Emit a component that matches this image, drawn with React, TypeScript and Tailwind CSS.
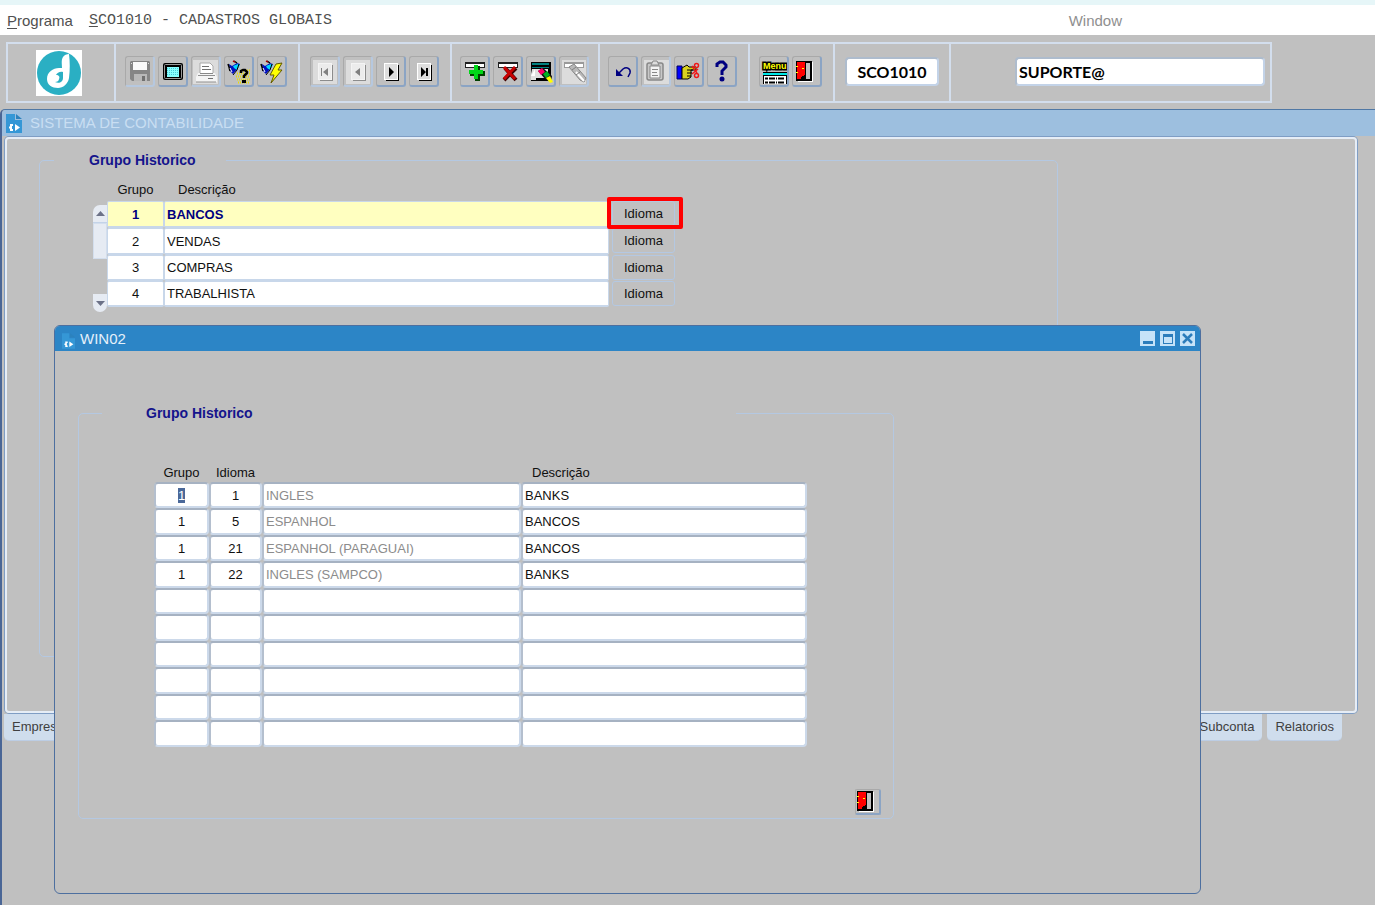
import { useEffect, useRef } from 'react'
import type { ReactNode } from 'react'
import clsx from 'clsx'

const grupos = [
  { grupo: '1', descricao: 'BANCOS' },
  { grupo: '2', descricao: 'VENDAS' },
  { grupo: '3', descricao: 'COMPRAS' },
  { grupo: '4', descricao: 'TRABALHISTA' },
]

const idiomas = [
  { grupo: '1', idioma: '1', nome: 'INGLES', descricao: 'BANKS' },
  { grupo: '1', idioma: '5', nome: 'ESPANHOL', descricao: 'BANCOS' },
  { grupo: '1', idioma: '21', nome: 'ESPANHOL (PARAGUAI)', descricao: 'BANCOS' },
  { grupo: '1', idioma: '22', nome: 'INGLES (SAMPCO)', descricao: 'BANKS' },
  ...Array.from({ length: 6 }, () => ({ grupo: '', idioma: '', nome: '', descricao: '' })),
]

function Flashlight() {
  return (
    <g>
      <path d="M5 8l3 2 5-3 3 1-2 4-5 6-3-3z" fill="#0010c0" />
      <path d="M9 10l5-2 2 1-3 5-3-2z" fill="#00d8ff" />
      <path d="M4 8l1 3 1 4M10 5l3 2" stroke="#000" strokeWidth="1.500" fill="none" />
      <path d="M9 5l2 1" stroke="#a00000" strokeWidth="1.500" />
      <path d="M15 8l-2 6-4 5" stroke="#000" fill="none" />
      <path d="M6 12l2 4" stroke="#fff" />
    </g>
  )
}

function NavPage({ d, off }: { d: string; off?: boolean }) {
  return (
    <g>
      {off && <path d="M3 4h24v24H3z" fill="#dcdcdc" />}
      <path d="M10 9h13v16H10z" fill={off ? '#8c8c8c' : '#000'} />
      <path d="M8 7h14v17H8z" fill={off ? '#f4f4f4' : '#fff'} />
      <path d="M9 8h12v15H9z" fill={off ? '#ececec' : '#dedede'} />
      <path d={d} fill={off ? '#808080' : '#000'} />
    </g>
  )
}

function Bar({ off }: { off?: boolean }) {
  return (
    <g>
      <path d="M5 6h20v6H5z" fill={off ? '#9a9a9a' : '#202020'} />
      <path d="M6 8h18v3H6z" fill="#fff" />
    </g>
  )
}

function Door() {
  return (
    <g shapeRendering="crispEdges">
      <path d="M4 5h16v20H4z" fill="#000" />
      <path d="M14 7h4v16h-4z" fill="#c0c0c0" />
      <path d="M20 6h1v20H6v-1h14z" fill="#fff" />
      <path d="M5 6h8v14l-3 3H5z" fill="#f00" />
      <path d="M13 6h1v15h-2l-2 2h-1v-2l4-2z" fill="#000" />
      <path d="M4 10h2v1H4zM4 16h2v1H4zM10 12h2v1h-2z" fill="#ff0" />
    </g>
  )
}

type Tool = { name: string; off?: boolean; art: ReactNode }

const fileTools: Tool[] = [
  {
    name: 'Salvar',
    off: true,
    art: (
      <g>
        <path d="M5 6l1-1h18l1 1v19H7l-2-2z" fill="#858585" />
        <path d="M8 6h14v8H8z" fill="#fafafa" />
        <path d="M6 7h1v1H6zM23 7h1v1h-1z" fill="#ddd" />
        <path d="M9 18h13v7H9z" fill="#b8b8b8" />
        <path d="M17 20h3v5h-3z" fill="#707070" />
      </g>
    ),
  },
  {
    name: 'Tela',
    art: (
      <g>
        <rect x="5" y="7" width="20" height="17" rx="2" fill="#000" />
        <rect x="6.500" y="8.500" width="17" height="14" rx="1" fill="none" stroke="#999" />
        <path d="M9 11h12v10H9z" fill="#8ff" />
        <path d="M9 12.500h12M9 14.500h12M9 16.500h12M9 18.500h12" stroke="#48ccd8" strokeDasharray="1 1" />
      </g>
    ),
  },
  {
    name: 'Imprimir',
    off: true,
    art: (
      <g>
        <path d="M2 4h25v24H2z" fill="#dcdcdc" />
        <path d="M9 7h10l3 3v8H9z" fill="#fff" stroke="#aaa" />
        <path d="M11 10.500h7M11 13.500h9" stroke="#707070" />
        <path d="M7 17h17l2 4v5H5v-5z" fill="#f4f4f4" />
        <path d="M7 19.500h17M5 26h20" stroke="#909090" />
        <path d="M17 22h5v1h-5z" fill="#707070" />
        <path d="M9 17.500h13" stroke="#888" />
      </g>
    ),
  },
  {
    name: 'Entrar consulta',
    art: (
      <g>
        <path d="M17 14.500h9M13 17.500h13M12 20.500h14M13 23.500h13M14 26.500h12" stroke="#e8e000" strokeWidth="2" strokeDasharray="1 1" />
        <Flashlight />
        <path d="M17 17v-2l2-1h2l2 2v1l-3 3v2" fill="none" stroke="#000" strokeWidth="2.500" />
        <path d="M18 24h4v3h-4z" fill="#000" />
      </g>
    ),
  },
  {
    name: 'Executar consulta',
    art: (
      <g>
        <path d="M19 8l6-1-4 7h4L14 27l3-8h-4z" fill="#ff0" stroke="#605800" />
        <Flashlight />
      </g>
    ),
  },
]

const navTools: Tool[] = [
  { name: 'Primeiro', off: true, art: <NavPage off d="M11 12h1v8h-1zM18 12v8l-5-4z" /> },
  { name: 'Anterior', off: true, art: <NavPage off d="M17 12v8l-5-4z" /> },
  { name: 'Próximo', art: <NavPage d="M13 11l5 5-5 5z" /> },
  { name: 'Último', art: <NavPage d="M12 11l5 5-5 5zM17 12h2v8h-2z" /> },
]

const recordTools: Tool[] = [
  {
    name: 'Incluir',
    art: (
      <g>
        <Bar />
        <path d="M15 10h5v5h5v5h-5v5h-5v-5h-5v-5h5z" fill="#004000" />
        <path d="M14 9h4v5h5v4h-5v5h-4v-5H9v-4h5z" fill="#00d818" />
      </g>
    ),
  },
  {
    name: 'Excluir',
    art: (
      <g>
        <Bar />
        <path d="M12 12l11 12M23 12L11 24" stroke="#400000" strokeWidth="4" />
        <path d="M11 11l11 12M22 11L11 23" stroke="#c80000" strokeWidth="3" />
      </g>
    ),
  },
  {
    name: 'Limpar',
    art: (
      <g>
        <path d="M5 6h20v19H5z" fill="#000" />
        <path d="M6 7h17v2H6zM6 11h17v1H6z" fill="#008080" />
        <path d="M6 13h16v9h-4v2H5v-6z" fill="#e0e0e0" />
        <path d="M5 20l4-7v7z" fill="#fff" />
        <path d="M10 22h9v2h-9z" fill="#000" />
        <path d="M12 15l5-3 9 8-1 6-5-2z" fill="#101010" />
        <path d="M12 15l4-3 3 4-4 3z" fill="#f06" />
        <path d="M17 18l4-3 3 4-4 3z" fill="#00b020" />
        <path d="M20 22l4-2 3 6-3 1z" fill="#ff0" />
      </g>
    ),
  },
  {
    name: 'Apagar',
    off: true,
    art: (
      <g>
        <path d="M3 4h24v24H3z" fill="#dcdcdc" />
        <Bar off />
        <path d="M10 11l5-3 12 14-2 4-4-2z" fill="#b8b8b8" stroke="#888" />
        <path d="M17 16l8 9" stroke="#fff" strokeWidth="2" />
        <path d="M13 14l4-3M17 19l4-3" stroke="#808080" />
      </g>
    ),
  },
]

const editTools: Tool[] = [
  {
    name: 'Desfazer',
    art: (
      <g fill="none" stroke="#000080">
        <path d="M10 18l5-5c4-3 8 0 7 4l-2 4" strokeWidth="1.500" />
        <path d="M8 13v7h7z" fill="#000080" stroke="none" />
      </g>
    ),
  },
  {
    name: 'Lista',
    off: true,
    art: (
      <g>
        <path d="M3 4h25v24H3z" fill="#dcdcdc" />
        <rect x="6" y="7" width="16" height="17" rx="2" fill="#c8c8c8" stroke="#888" strokeWidth="1.500" />
        <path d="M9 10h10v12H9z" fill="#f4f4f4" stroke="#888" />
        <path d="M10 9l2-4h4l2 4z" fill="#ddd" stroke="#888" />
        <path d="M11 13.500h6M11 16.500h5M11 19.500h6" stroke="#888" />
      </g>
    ),
  },
  {
    name: 'Recortar',
    art: (
      <g>
        <path d="M3 10h5v13H3z" fill="#00f" stroke="#000060" />
        <path d="M8 12l5-3 2 2h7v3h-5v7l-3 2H8z" fill="#d8d020" stroke="#000" />
        <path d="M13 14h6M13 17h5M13 20h4" stroke="#000" />
        <g fill="none" stroke="#f01818" strokeWidth="1.500">
          <circle cx="22.500" cy="9.500" r="2" />
          <circle cx="22.500" cy="19.500" r="2" />
          <path d="M18 10l5 7M18 18l6-5" />
        </g>
      </g>
    ),
  },
  {
    name: 'Ajuda',
    art: (
      <g>
        <path d="M10 11V8l3-2h3l3 3v2l-4 4v4" fill="none" stroke="#000080" strokeWidth="3" />
        <circle cx="15" cy="23" r="2.500" fill="#000080" />
      </g>
    ),
  },
]

const menuTools: Tool[] = [
  {
    name: 'Menu',
    art: (
      <g>
        <path d="M4 16h24v12H4z" fill="#000" />
        <text
          x="4"
          y="13"
          fill="#ff0"
          stroke="#000"
          strokeWidth="3"
          paintOrder="stroke"
          className="font-['Liberation_Sans',sans-serif] text-[9px] font-bold"
        >
          Menu
        </text>
        <path d="M4 17h24v2H4z" fill="#00e8e8" />
        <path d="M5 20h22v8H5z" fill="#fff" />
        <path d="M6 22.500h3M10 22.500h6M17 22.500h1M19 22.500h6M6 26.500h3M10 26.500h6M17 26.500h1M19 26.500h6" stroke="#000" strokeWidth="2" />
      </g>
    ),
  },
  { name: 'Sair', art: <Door /> },
]

function ToolGroup({ tools, className }: { tools: Tool[]; className: string }) {
  return (
    <div className={clsx('flex shrink-0 items-start gap-[3px] border-r-2 border-[#d3deed] pt-3', className)}>
      {tools.map((tool) => (
        <button
          key={tool.name}
          type="button"
          aria-label={tool.name}
          disabled={tool.off}
          className={clsx(
            'h-[31px] w-[30px] shrink-0 rounded-[3px] border-t border-l border-r-2 border-b-2 border-t-[#a9a9a9] border-l-[#a9a9a9]',
            tool.off ? 'border-r-[#b6c8df] border-b-[#b6c8df]' : 'border-r-[#8ba4c4] border-b-[#8ba4c4]',
          )}
        >
          <svg viewBox="1 1 27 28" className="block h-[28px] w-[27px]" aria-hidden="true">
            {tool.art}
          </svg>
        </button>
      ))}
    </div>
  )
}

function FormIcon({ className }: { className: string }) {
  return (
    <svg viewBox="0 0 16 19" className={className} aria-hidden="true">
      <path d="M0 0h9v6h7v13H0z" fill="#3597d6" />
      <path d="M10 0l6 5h-6z" fill="#2c82bd" />
      <path d="M9 10l5 3.500L9 17z" fill="#fff" />
      <path d="M7 11H5v5h2M3 13.500h2" stroke="#fff" strokeWidth="2" fill="none" />
    </svg>
  )
}

function MenuBar() {
  return (
    <nav className="flex h-[30px] items-center bg-white pt-px text-[15px] leading-5 text-[#505050]">
      <button type="button" className="ml-[7px]">
        <span className="underline underline-offset-2">P</span>rograma
      </button>
      <button type="button" className="ml-4 font-['Liberation_Mono',monospace]">
        <span className="underline underline-offset-2">S</span>CO1010 - CADASTROS GLOBAIS
      </button>
      <button type="button" className="mr-[253px] ml-auto text-[#8f8f8f]">
        Window
      </button>
    </nav>
  )
}

function Toolbar() {
  const field =
    "h-[29px] rounded-[4px] border-2 border-[#c3d3e8] border-t-[#aebccd] border-l-[#aebccd] bg-white font-['Lato',sans-serif] text-[16px] font-bold text-black outline-none"

  return (
    <header className="pt-[7px] pr-[103px] pb-[6px] pl-[6px]">
      <div className="flex h-[61px] border-2 border-[#d3deed]">
        <div className="w-[108px] shrink-0 border-r-2 border-[#d3deed] pt-[6px] pl-7">
          <svg viewBox="0 0 46 46" className="h-[46px] w-[46px]" role="img" aria-label="Logo">
            <path d="M0 0h46v46H0z" fill="#fff" />
            <circle cx="23" cy="23" r="22" fill="#2aafc3" />
            <path
              d="M26 18c0-4-1-8 1-11 1-2 4-3 6-3 1 8 1 16 0 24-1 6-6 10-11 10-6 0-11-3-11-9 0-7 6-11 12-11z"
              fill="#fff"
            />
            <path d="M27 22c-3-1-6 1-7 3 3 0 4 2 3 4 0 2-2 3-4 3 4 2 8 0 8-4z" fill="#2aafc3" />
          </svg>
        </div>
        <ToolGroup tools={fileTools} className="w-[184px] pl-[9px]" />
        <ToolGroup tools={navTools} className="w-[152px] pl-[10px]" />
        <ToolGroup tools={recordTools} className="w-[148px] pl-2" />
        <ToolGroup tools={editTools} className="w-[150px] pl-2" />
        <ToolGroup tools={menuTools} className="w-[85px] pl-[9px]" />
        <div className="w-[116px] shrink-0 border-r-2 border-[#d3deed] pt-[13px] pl-[10px]">
          <input aria-label="Programa" defaultValue="SCO1010" className={clsx(field, 'w-[94px] text-center')} />
        </div>
        <div className="min-w-0 flex-1 pt-[13px] pr-[5px] pl-16">
          <input aria-label="Usuário" defaultValue="SUPORTE@" className={clsx(field, 'w-full pl-[2px]')} />
        </div>
      </div>
    </header>
  )
}

function RecordScroll() {
  return (
    <div className="mt-[35px] flex h-[107px] w-[14px] flex-col">
      <button
        type="button"
        aria-label="Registro anterior"
        className="flex h-[18px] items-center justify-center rounded-tl-[7px] border-b border-[#c3d3e8] bg-[#e6ebf3]"
      >
        <svg viewBox="0 0 9 5" className="h-[5px] w-[9px]">
          <path d="M0 5l4.500-5L9 5z" fill="#6c7288" />
        </svg>
      </button>
      <div className="h-[36px] border border-[#d3deed] bg-[#e6ebf3]" />
      <button
        type="button"
        aria-label="Próximo registro"
        className="mt-auto flex h-[18px] items-center justify-center rounded-b-[7px] bg-[#e6ebf3]"
      >
        <svg viewBox="0 0 9 5" className="h-[5px] w-[9px]">
          <path d="M0 0h9L4.500 5z" fill="#6c7288" />
        </svg>
      </button>
    </div>
  )
}

function GruposTable() {
  return (
    <table className="w-[575px] table-fixed border-separate border-spacing-0">
      <colgroup>
        <col className="w-[57px]" />
        <col className="w-[445px]" />
        <col />
      </colgroup>
      <thead>
        <tr className="h-[31px] align-bottom leading-4">
          <th className="pb-[3px] font-normal">Grupo</th>
          <th className="pb-[3px] pl-[14px] text-left font-normal">Descrição</th>
          <td />
        </tr>
      </thead>
      <tbody>
        {grupos.map((row, i) => {
          const field = clsx(
            'block w-full rounded-[2px] border border-b-2 border-[#c8d7ea] outline-none',
            i < 2 ? 'h-[27px]' : 'h-[26px]',
            i === 0 ? 'bg-[#ffffc0] font-bold text-[#000080]' : 'bg-white',
          )
          return (
            <tr key={row.grupo} className="align-top">
              <td className="p-0">
                <input aria-label={`Grupo ${i + 1}`} defaultValue={row.grupo} className={clsx(field, 'text-center')} />
              </td>
              <td className="p-0">
                <input aria-label={`Descrição ${i + 1}`} defaultValue={row.descricao} className={clsx(field, 'pl-[2px]')} />
              </td>
              <td className="p-0">
                <div className="relative pl-[3px]">
                  <button type="button" className="block h-[25px] w-[63px] rounded-[3px] border border-[#b4c8e2]">
                    Idioma
                  </button>
                  {i === 0 && (
                    <div className="pointer-events-none absolute -top-[4px] -left-[2px] z-10 h-[32px] w-[76px] rounded-[2px] border-4 border-[#f00]" />
                  )}
                </div>
              </td>
            </tr>
          )
        })}
      </tbody>
    </table>
  )
}

function IdiomasTable() {
  const active = useRef<HTMLInputElement>(null)

  useEffect(() => {
    active.current?.focus()
    active.current?.select()
  }, [])

  return (
    <table className="ml-[75px] w-[653px] table-fixed border-separate border-spacing-0">
      <colgroup>
        <col className="w-[55px]" />
        <col className="w-[53px]" />
        <col className="w-[259px]" />
        <col />
      </colgroup>
      <thead>
        <tr className="h-[59px] align-bottom leading-4">
          <th className="pb-px font-normal">Grupo</th>
          <th className="pb-px font-normal">Idioma</th>
          <td />
          <th className="pb-px pl-[11px] text-left font-normal">Descrição</th>
        </tr>
      </thead>
      <tbody>
        {idiomas.map((row, i) => {
          const field = clsx(
            'block w-full rounded-[4px] border-2 border-t-[#a6b2c2] border-r-[#ccd9ea] border-b-[#ccd9ea] border-l-[#b4bfce] bg-white outline-none selection:bg-[#4a6899] selection:text-white',
            i % 2 ? 'h-[27px]' : 'h-[26px]',
          )
          return (
            <tr key={i}>
              <td className="p-0">
                <input
                  ref={i === 0 ? active : undefined}
                  aria-label={`Grupo, linha ${i + 1}`}
                  defaultValue={row.grupo}
                  className={clsx(field, 'text-center')}
                />
              </td>
              <td className="p-0">
                <input aria-label={`Idioma, linha ${i + 1}`} defaultValue={row.idioma} className={clsx(field, 'text-center')} />
              </td>
              <td className="p-0">
                <input
                  aria-label={`Nome do idioma, linha ${i + 1}`}
                  defaultValue={row.nome}
                  readOnly
                  className={clsx(field, 'pl-[2px] text-[#8c8c8c]')}
                />
              </td>
              <td className="p-0">
                <input aria-label={`Descrição, linha ${i + 1}`} defaultValue={row.descricao} className={clsx(field, 'pl-[2px]')} />
              </td>
            </tr>
          )
        })}
      </tbody>
    </table>
  )
}

function IdiomaWindow() {
  const control = 'flex h-[15px] w-[15px] items-center justify-center bg-[#c6e3f8]'

  return (
    <section
      aria-label="WIN02"
      className="absolute top-[325px] right-[174px] left-[54px] rounded-[6px] border border-[#4d6f9f] bg-[#c0c0c0] pb-[74px]"
    >
      <div className="flex h-[25px] items-center rounded-t-[5px] bg-[#2c85c6] pr-[5px] pl-[7px]">
        <FormIcon className="mt-1 h-[16px] w-[13px]" />
        <h2 className="ml-[5px] text-[15px] leading-5 text-[#e4f0fa]">WIN02</h2>
        <div className="ml-auto flex gap-[5px]">
          <button type="button" aria-label="Minimizar" className={control}>
            <svg viewBox="0 0 15 15" className="h-[15px] w-[15px]">
              <path d="M3 10h10v3H3z" fill="#2c7dbb" />
            </svg>
          </button>
          <button type="button" aria-label="Maximizar" className={control}>
            <svg viewBox="0 0 15 15" className="h-[15px] w-[15px]">
              <path d="M3 3h10v10H3zM4 6v6h8V6z" fill="#2c7dbb" fillRule="evenodd" />
            </svg>
          </button>
          <button type="button" aria-label="Fechar" className={control}>
            <svg viewBox="0 0 15 15" className="h-[15px] w-[15px]">
              <path d="M3 3l9 9M12 3l-9 9" stroke="#2c7dbb" strokeWidth="2.500" />
            </svg>
          </button>
        </div>
      </div>
      <fieldset className="mt-[52px] mr-[306px] ml-[23px] rounded-[5px] border border-[#b4c8e2] pb-[3px]">
        <legend className="ml-[23px] w-[634px] pl-[44px] text-[14px] leading-5 font-bold text-[#14148c]">
          Grupo Historico
        </legend>
        <IdiomasTable />
        <div className="mt-[42px] mr-3 flex justify-end">
          <button
            type="button"
            aria-label="Sair da janela"
            className="h-[26px] w-[26px] rounded-[2px] border-t border-l border-r-2 border-b-2 border-t-[#a9a9a9] border-r-[#8ba4c4] border-b-[#8ba4c4] border-l-[#a9a9a9]"
          >
            <svg viewBox="3 4 23 23" className="block h-[23px] w-[23px]" aria-hidden="true">
              <Door />
            </svg>
          </button>
        </div>
      </fieldset>
    </section>
  )
}

export default function App() {
  const tab = 'h-[27px] rounded-b-[5px] border-b border-[#bccde4] bg-[#cfdded] px-2 text-[#404040]'

  return (
    <div className="relative flex min-h-screen flex-col bg-[#c0c0c0] font-['Liberation_Sans',Arial,sans-serif] text-[13px] text-[#101010]">
      <div className="h-[5px] bg-[#e6f6f8]" />
      <MenuBar />
      <Toolbar />
      <main className="flex flex-1 flex-col rounded-tl-[5px] border-t border-l-2 border-t-[#5078a5] border-l-[#4a6696]">
        <div className="flex h-[26px] items-center rounded-tl-[4px] bg-[#9dbfdf] pl-1">
          <FormIcon className="h-[19px] w-[16px]" />
          <h1 className="ml-2 text-[15px] leading-5 text-[#c9def2]">SISTEMA DE CONTABILIDADE</h1>
        </div>
        <div className="mt-px mr-[18px] ml-[3px] flex h-[576px] flex-col rounded-[4px] border-2 border-[#e6edf6] ring-1 ring-[#7f9dc4]">
          <fieldset className="mt-[11px] mr-[297px] mb-[54px] ml-8 flex-1 rounded-[5px] border border-[#b4c8e2]">
            <legend className="ml-[14px] w-[172px] pl-[35px] text-[14px] leading-5 font-bold text-[#14148c]">
              Grupo Historico
            </legend>
            <div className="flex items-start pl-[53px]">
              <RecordScroll />
              <GruposTable />
            </div>
          </fieldset>
        </div>
        <div role="tablist" className="mt-px mr-[33px] ml-[2px] flex">
          <button type="button" role="tab" className={clsx(tab, 'w-[76px] text-left')}>
            Empresa
          </button>
          <button type="button" role="tab" className={clsx(tab, 'ml-auto')}>
            Subconta
          </button>
          <button type="button" role="tab" className={clsx(tab, 'ml-[5px]')}>
            Relatorios
          </button>
        </div>
      </main>
      <IdiomaWindow />
    </div>
  )
}
